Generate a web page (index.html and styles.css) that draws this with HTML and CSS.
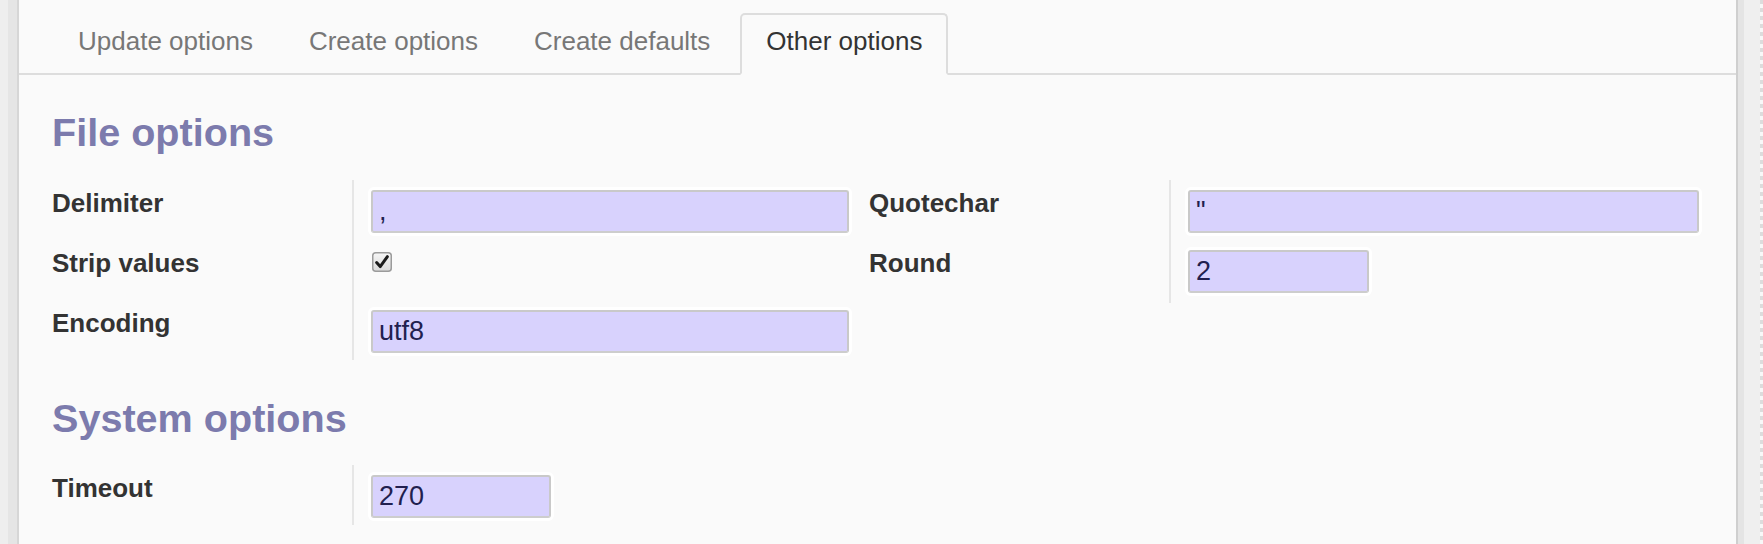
FILE: index.html
```html
<!DOCTYPE html>
<html>
<head>
<meta charset="utf-8">
<link rel="stylesheet" href="styles.css">
</head>
<body>
<div class="frame">
  <div class="gutter-a"></div>
  <div class="gutter-b"></div>
  <div class="sheet">
    <ul class="tabs">
      <li class="tab">Update options</li>
      <li class="tab">Create options</li>
      <li class="tab">Create defaults</li>
      <li class="tab active">Other options</li>
    </ul>
    <div class="content">
      <h2 class="heading">File options</h2>
      <div class="groups">
        <div class="group group-left">
          <div class="label">Delimiter</div>
          <div class="field"><input class="input" type="text" value=","></div>
          <div class="label">Strip values</div>
          <div class="field">
            <span class="checkbox">
              <svg width="20" height="20" viewBox="0 0 20 20">
                <defs>
                  <linearGradient id="cbg" x1="0" y1="0" x2="0" y2="1">
                    <stop offset="0" stop-color="#f6f6f6"/>
                    <stop offset="1" stop-color="#d9d9d9"/>
                  </linearGradient>
                </defs>
                <rect x="0.75" y="0.75" width="18.5" height="18.5" rx="3" fill="url(#cbg)" stroke="#9b9b9b" stroke-width="1.5"/>
                <path d="M4.6 10.6 L8.2 14.6 L15.4 4.6" fill="none" stroke="#1a1a1a" stroke-width="3" stroke-linecap="round" stroke-linejoin="round"/>
              </svg>
            </span>
          </div>
          <div class="label">Encoding</div>
          <div class="field"><input class="input" type="text" value="utf8"></div>
        </div>
        <div class="group group-right">
          <div class="label">Quotechar</div>
          <div class="field"><input class="input" type="text" value="&quot;"></div>
          <div class="label label-last">Round</div>
          <div class="field"><input class="input input-short" type="text" value="2"></div>
        </div>
      </div>
      <h2 class="heading heading-second">System options</h2>
      <div class="groups">
        <div class="group group-left">
          <div class="label">Timeout</div>
          <div class="field"><input class="input input-timeout" type="text" value="270"></div>
        </div>
      </div>
    </div>
  </div>
  <div class="rail"></div>
  <div class="rest"></div>
  <div class="dash"></div>
</div>
</body>
</html>
```

FILE: styles.css
```css
* { box-sizing: border-box; }

html, body {
  margin: 0;
  padding: 0;
  height: 544px;
  overflow: hidden;
  background: #efefef;
  font-family: "Liberation Sans", Arial, Helvetica, sans-serif;
}

.frame {
  display: flex;
  height: 544px;
}

.gutter-a { width: 8px; background: #eeeeee; }
.gutter-b { width: 9px; background: #e5e5e5; }

.sheet {
  width: 1721px;
  background: #fafafa;
  border-left: 2px solid #d6d6d6;
  border-right: 2px solid #cfcfcf;
}

.rail { width: 6px; background: #e4e4e4; }
.rest { flex: 1; background: #efefef; }
.dash {
  width: 3px;
  background: repeating-linear-gradient(to bottom, #dcdcdc 0, #dcdcdc 4px, #f8f8f8 4px, #f8f8f8 8px);
}

.tabs {
  display: flex;
  list-style: none;
  margin: 0;
  padding: 13px 0 0 33px;
  border-bottom: 2px solid #dddddd;
}

.tab {
  margin: 0 4px -2px 0;
  padding: 11px 24px 17px;
  border: 2px solid transparent;
  border-radius: 5px 5px 0 0;
  font-size: 26px;
  line-height: 30px;
  color: #777777;
  white-space: nowrap;
}

.tab.active {
  color: #333333;
  background: #fafafa;
  border-color: #dddddd;
  border-bottom-color: #fafafa;
}

.content {
  padding: 0 37px 0 33px;
}

.heading {
  margin: 34px 0 25px;
  font-size: 39.6px;
  line-height: 46px;
  font-weight: bold;
  color: #7c7bad;
}

.heading-second {
  margin: 35px 0 24px;
}

.groups {
  display: flex;
  gap: 20px;
}

.group {
  display: grid;
  grid-template-columns: 302px 1fr;
  grid-auto-rows: 60px;
}

.group-left { flex: 0 0 797px; }
.group-right { flex: 1; }

.label {
  padding-top: 8px;
  border-right: 2px solid #e6e6e6;
  font-size: 26px;
  line-height: 30px;
  font-weight: bold;
  color: #333333;
  white-space: nowrap;
}

.label-last {
  height: 63px;
}

.field {
  padding: 10px 0 7px 17px;
}

.input {
  display: block;
  width: 100%;
  height: 43px;
  margin: 0;
  padding: 0 6px;
  border: 2px solid #c9c9c9;
  border-bottom-color: #cdcdcd;
  border-radius: 3px;
  background: #d8d2fd;
  box-shadow: 0 0 0 3px #ffffff;
  font-family: "Liberation Sans", Arial, Helvetica, sans-serif;
  font-size: 27px;
  color: #221f4f;
  outline: none;
}

.input-short { width: 181px; }
.input-timeout { width: 180px; }

.checkbox {
  display: block;
  width: 20px;
  height: 20px;
  margin: 2px 0 0 1px;
}

.checkbox svg { display: block; }
```
